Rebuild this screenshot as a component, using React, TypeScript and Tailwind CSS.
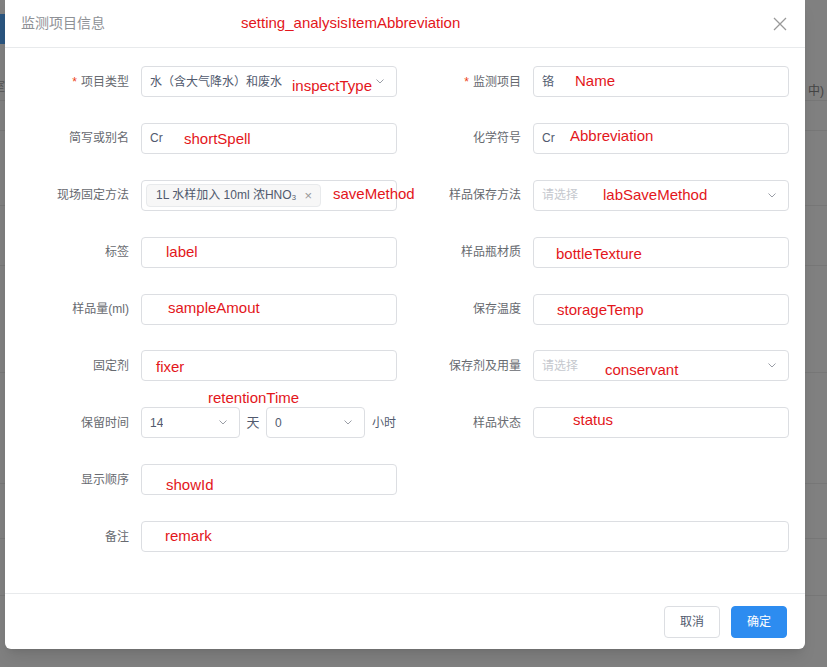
import React from "react";

const FONT = { fontFamily: '"Liberation Sans", "Noto Sans CJK SC", sans-serif' };

type Note = { text: string; x: number; y: number };

const NOTES: Note[] = [
  { text: "setting_analysisItemAbbreviation", x: 241, y: 23 },
  { text: "inspectType", x: 292, y: 86 },
  { text: "Name", x: 575, y: 81 },
  { text: "shortSpell", x: 184, y: 139 },
  { text: "Abbreviation", x: 570, y: 136 },
  { text: "saveMethod", x: 333, y: 194 },
  { text: "labSaveMethod", x: 603, y: 195 },
  { text: "label", x: 166, y: 252 },
  { text: "bottleTexture", x: 556, y: 254 },
  { text: "sampleAmout", x: 168, y: 308 },
  { text: "storageTemp", x: 557, y: 310 },
  { text: "fixer", x: 156, y: 367 },
  { text: "retentionTime", x: 208, y: 398 },
  { text: "conservant", x: 605, y: 370 },
  { text: "status", x: 573, y: 420 },
  { text: "showId", x: 166, y: 485 },
  { text: "remark", x: 165, y: 536 },
];

function Chevron() {
  return (
    <svg width="8" height="5" viewBox="0 0 8 5" className="shrink-0">
      <polyline points="0.5,0.5 4,4 7.5,0.5" fill="none" stroke="#9a9ea6" strokeWidth="1" />
    </svg>
  );
}

function Label({ text, required }: { text: string; required?: boolean }) {
  return (
    <div className="w-[120px] shrink-0 pr-3 flex items-center justify-end h-[31px] text-[12px] text-[#676a70]">
      {required ? <span className="mr-1 text-[#ed4014]">*</span> : null}
      {text}
    </div>
  );
}

function Box({
  children,
  className = "px-2",
}: {
  children?: React.ReactNode;
  className?: string;
}) {
  return (
    <div
      className={
        "h-[31px] flex items-center rounded border border-[#dcdee2] bg-white text-[12px] text-[#515a6e] " +
        className
      }
    >
      {children}
    </div>
  );
}

function Field({
  label,
  required,
  children,
}: {
  label: string;
  required?: boolean;
  children?: React.ReactNode;
}) {
  return (
    <div className="flex h-[31px]">
      <Label text={label} required={required} />
      <div className="flex-1 min-w-0">{children ?? <Box />}</div>
    </div>
  );
}

function Select({ value, placeholder }: { value?: string; placeholder?: string }) {
  return (
    <Box className="justify-between pl-2 pr-3">
      {value ? (
        <span className="truncate">{value}</span>
      ) : (
        <span className="text-[#c5c8ce]">{placeholder}</span>
      )}
      <Chevron />
    </Box>
  );
}

export default function App() {
  return (
    <div className="relative w-[827px] h-[667px] overflow-hidden bg-[#808080]" style={FONT}>
      {/* page behind the mask */}
      <div className="absolute left-0 top-[14px] w-[5px] h-[30px] bg-[#2b5680]" />
      <div className="absolute left-0 top-[100px] w-full h-px bg-[#777]" />
      <div className="absolute left-0 top-[130px] w-full h-px bg-[#777]" />
      <div className="absolute left-0 top-[205px] w-full h-px bg-[#777]" />
      <div className="absolute left-0 top-[265px] w-full h-px bg-[#777]" />
      <div className="absolute left-0 top-[372px] w-full h-px bg-[#777]" />
      <div className="absolute left-0 top-[483px] w-full h-px bg-[#777]" />
      <div className="absolute left-0 top-[538px] w-full h-px bg-[#777]" />
      <div className="absolute left-0 top-[595px] w-full h-px bg-[#777]" />
      <div className="absolute left-0 top-[78px] w-[5px] overflow-hidden">
        <div className="w-[12px] -ml-[7px] text-[12px] text-[#555]">室</div>
      </div>
      <div className="absolute left-[808px] top-[82px] text-[12px] text-[#444]">中)</div>

      <div className="relative ml-[5px] w-[800px] h-[649px] flex flex-col bg-white rounded-b-md shadow-lg">
        <div className="h-[48px] shrink-0 flex items-center justify-between px-4 border-b border-[#e8eaec]">
          <span className="text-[14px] text-[#8e9196]">监测项目信息</span>
          <svg width="14" height="14" viewBox="0 0 14 14" className="mr-[2px]">
            <path d="M1 1 L13 13 M13 1 L1 13" stroke="#999" strokeWidth="1.3" />
          </svg>
        </div>

        <div className="flex-1 px-4 pt-[18px] flex flex-col gap-[25.875px]">
          <div className="grid grid-cols-2 gap-x-4">
            <Field label="项目类型" required>
              <Select value="水（含大气降水）和废水" />
            </Field>
            <Field label="监测项目" required>
              <Box>铬</Box>
            </Field>
          </div>
          <div className="grid grid-cols-2 gap-x-4">
            <Field label="简写或别名">
              <Box>Cr</Box>
            </Field>
            <Field label="化学符号">
              <Box>Cr</Box>
            </Field>
          </div>
          <div className="grid grid-cols-2 gap-x-4">
            <Field label="现场固定方法">
              <Box className="px-1">
                <span className="flex items-center h-[23px] rounded-sm border border-[#e8eaec] bg-[#f7f7f7] pl-[9px] pr-2 text-[12px] text-[#515a6e]">
                  1L 水样加入 10ml 浓HNO₃
                  <span className="ml-2 text-[13px] text-[#999]">×</span>
                </span>
              </Box>
            </Field>
            <Field label="样品保存方法">
              <Select placeholder="请选择" />
            </Field>
          </div>
          <div className="grid grid-cols-2 gap-x-4">
            <Field label="标签" />
            <Field label="样品瓶材质" />
          </div>
          <div className="grid grid-cols-2 gap-x-4">
            <Field label="样品量(ml)" />
            <Field label="保存温度" />
          </div>
          <div className="grid grid-cols-2 gap-x-4">
            <Field label="固定剂" />
            <Field label="保存剂及用量">
              <Select placeholder="请选择" />
            </Field>
          </div>
          <div className="grid grid-cols-2 gap-x-4">
            <Field label="保留时间">
              <div className="flex items-center text-[12px] text-[#515a6e]">
                <div className="w-[99px]">
                  <Select value="14" />
                </div>
                <span className="w-[26px] text-center text-[13px]">天</span>
                <div className="w-[99px]">
                  <Select value="0" />
                </div>
                <span className="ml-[7px] text-[12px]">小时</span>
              </div>
            </Field>
            <Field label="样品状态" />
          </div>
          <div className="grid grid-cols-2 gap-x-4">
            <Field label="显示顺序" />
            <div />
          </div>
          <Field label="备注" />
        </div>

        <div className="h-[56px] shrink-0 flex items-center justify-end gap-[11px] pr-[18px] border-t border-[#e8eaec]">
          <button className="w-[56px] h-[32px] rounded border border-[#dcdee2] bg-white text-[12px] text-[#515a6e]">
            取消
          </button>
          <button className="w-[56px] h-[32px] rounded border border-[#2d8cf0] bg-[#2d8cf0] text-[12px] text-white">
            确定
          </button>
        </div>
      </div>

      {/* red field-name annotations drawn on top of the dialog */}
      {NOTES.map((n) => (
        <div
          key={n.text}
          className="absolute text-[15px] leading-[18px] text-[#e3161b] whitespace-nowrap"
          style={{ left: n.x, top: n.y - 9 }}
        >
          {n.text}
        </div>
      ))}
    </div>
  );
}
